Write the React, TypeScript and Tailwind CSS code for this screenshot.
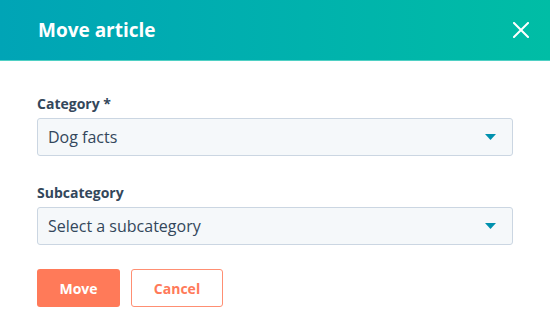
const SelectBox = ({ value }: { value: string }) => (
  <div className="flex h-[38px] items-center justify-between rounded-[3px] border border-[#cbd6e2] bg-[#f5f8fa] pl-[10px] pr-[16px]">
    <span className="text-[16px] text-[#33475b]">{value}</span>
    <svg width="11" height="6" viewBox="0 0 11 6">
      <path d="M0 0h11L5.5 6z" fill="#0091ae" />
    </svg>
  </div>
);

export default function App() {
  return (
    <div
      className="h-[326px] w-[550px] bg-white"
      style={{ fontFamily: '"Open Sans", sans-serif' }}
    >
      {/* Header */}
      <div className="flex h-[61px] items-center justify-between border-b border-[#4fd0c4] bg-gradient-to-r from-[#00a4b6] to-[#00bda5] pl-[38px] pr-[21px]">
        <h1 className="text-[19px] font-bold text-white">Move article</h1>
        <svg width="16" height="16" viewBox="0 0 16 16" className="mb-[1px]">
          <path d="M1 1l14 14M15 1L1 15" stroke="white" strokeWidth="2" strokeLinecap="square" />
        </svg>
      </div>

      {/* Body */}
      <div className="px-[37px] pt-[32px]">
        <label className="block text-[14px] font-bold text-[#33475b]">Category *</label>
        <div className="mt-[4px]">
          <SelectBox value="Dog facts" />
        </div>

        <label className="mt-[26px] block text-[14px] font-bold text-[#33475b]">Subcategory</label>
        <div className="mt-[4px]">
          <SelectBox value="Select a subcategory" />
        </div>

        <div className="mt-[24px] flex gap-[11px]">
          <button className="h-[38px] w-[83px] rounded-[3px] bg-[#ff7a59] text-[14px] font-bold text-white">
            Move
          </button>
          <button className="h-[38px] w-[92px] rounded-[3px] border border-[#ff8f73] bg-white text-[14px] font-bold text-[#ff7a59]">
            Cancel
          </button>
        </div>
      </div>
    </div>
  );
}
